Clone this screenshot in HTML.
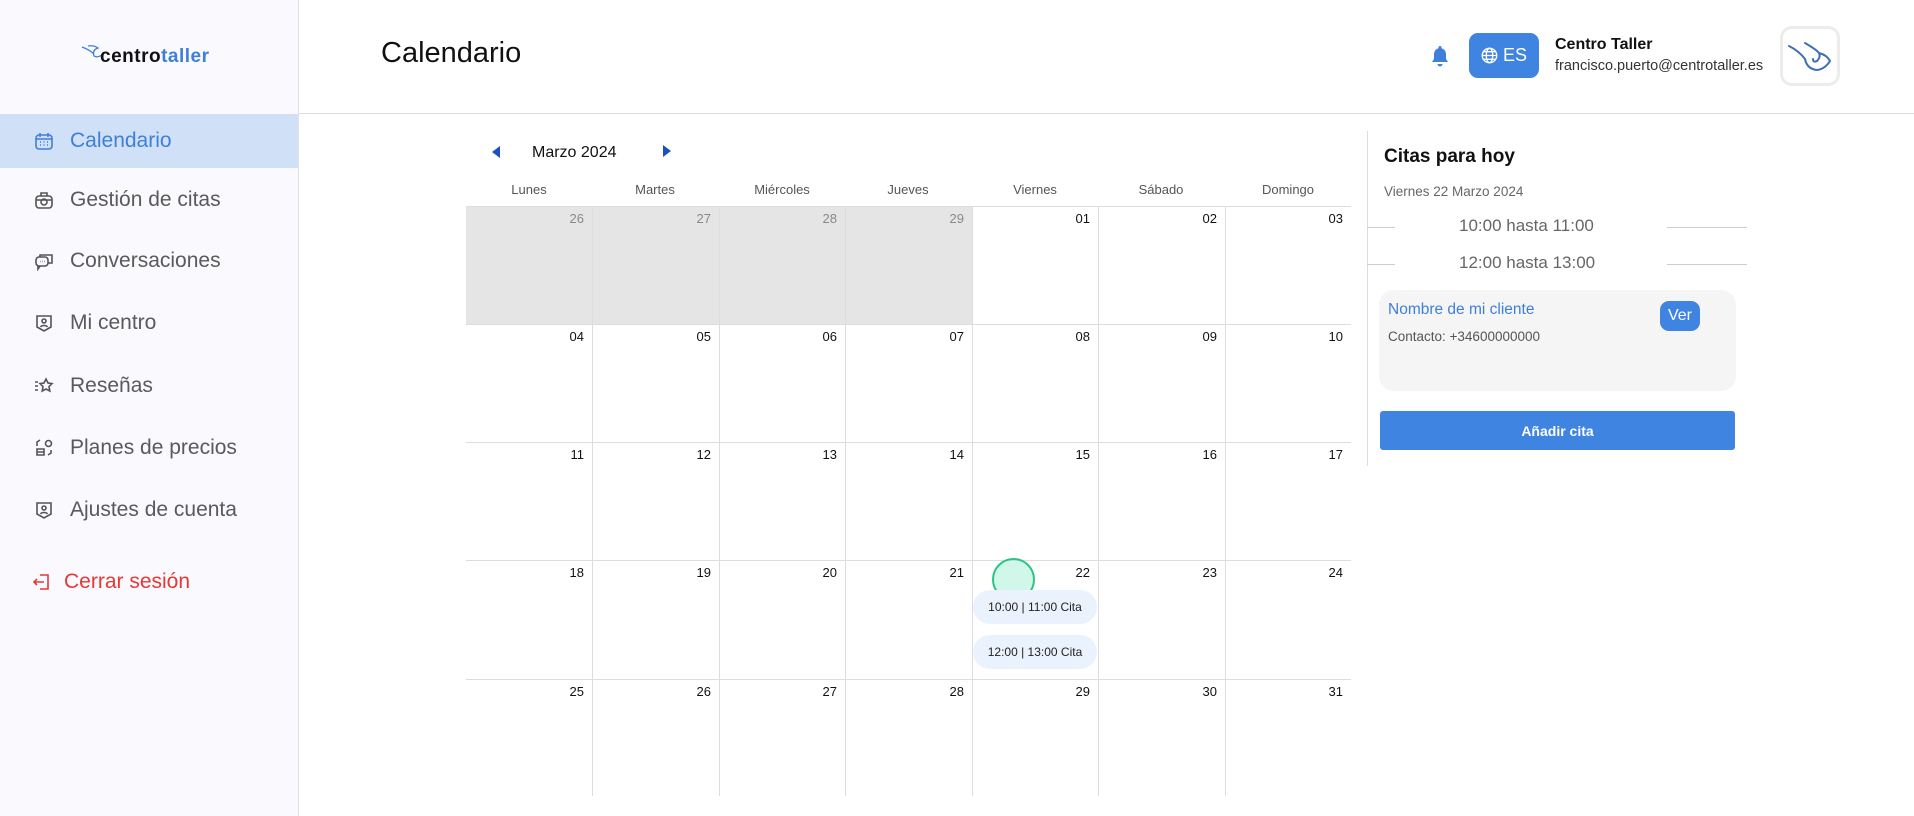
<!DOCTYPE html>
<html><head><meta charset="utf-8"><style>
*{box-sizing:border-box;margin:0;padding:0}
body{width:1914px;height:816px;overflow:hidden;background:#fff;font-family:"Liberation Sans",sans-serif;position:relative;color:#111}
.abs{position:absolute}
.side{left:0;top:0;width:299px;height:816px;background:#f9f9fe;border-right:1px solid #e2e2ea}
.item{position:absolute;left:0;width:298px;height:54px;display:flex;align-items:center;padding-left:34px;font-size:21px;color:#5a5a5a}
.item svg{width:20px;height:20px;margin-right:16px;stroke:#555;fill:none;stroke-width:1.6}
.item.act{background:#cfe0f7;color:#3f7fd9}
.item.act svg{stroke:#3f7fd9}
.hdr{left:299px;top:0;right:0;height:114px;border-bottom:1px solid #ddd}
.cell{position:absolute;border-left:1px solid #ddd;border-top:1px solid #ddd;font-size:13px;text-align:right;padding:4px 8px 0 0;color:#111}
.cell.g{background:#e5e5e5;color:#888}
.dn{position:absolute;top:182px;font-size:13px;color:#555;text-align:center;width:126px}
.pill{position:absolute;left:973px;width:124px;height:34px;border-radius:17px;background:#eaf2fd;font-size:12px;color:#222;display:flex;align-items:center;justify-content:center}
.tl{position:absolute;height:1px;background:#ccc}
</style></head><body>
<div class="abs side">
  <div class="abs" style="left:80px;top:42px;width:150px;height:30px">
    <svg width="30" height="20" style="position:absolute;left:0;top:2px" viewBox="0 0 30 20"><path d="M2 3 Q10 6 14 10 M8 2 Q14 1 18 4 Q12 6 14 12 Q17 14 22 11" stroke="#3f7fd9" stroke-width="1.3" fill="none"/></svg>
    <span style="position:absolute;left:20px;top:4px;font-size:19px;font-weight:bold;letter-spacing:0.5px;color:#111">centro<span style="color:#3f7fd9">taller</span></span>
  </div>
  <div class="item act" style="top:114px"><svg viewBox="0 0 20 20"><rect x="2" y="4" width="16" height="14" rx="3"/><path d="M6 2v4M14 2v4M2 8h16M6 11h1M9.5 11h1M13 11h1M6 14h1M9.5 14h1M13 14h1"/></svg>Calendario</div>
  <div class="item" style="top:173px"><svg viewBox="0 0 20 20"><rect x="2" y="6" width="16" height="12" rx="3"/><path d="M7 6V3h6v3M2 10h16"/><circle cx="10" cy="12" r="3"/></svg>Gestión de citas</div>
  <div class="item" style="top:234px"><svg viewBox="0 0 20 20"><rect x="2" y="6" width="12" height="9" rx="3"/><path d="M6 15l-2 3v-3M6 6V4h12v8h-4M6 10.5h.5M8 10.5h.5M10 10.5h.5"/></svg>Conversaciones</div>
  <div class="item" style="top:296px"><svg viewBox="0 0 20 20"><path d="M3 3h14v11l-7 4-7-4z"/><circle cx="10" cy="8" r="2"/><path d="M6.5 14c1-2 6-2 7 0"/></svg>Mi centro</div>
  <div class="item" style="top:359px"><svg viewBox="0 0 20 20"><path d="M12 3l2 4 4 .6-3 3 .8 4.4-3.8-2-3.8 2 .8-4.4-3-3 4-.6zM1 6h3M1 10h3M1 14h3"/></svg>Reseñas</div>
  <div class="item" style="top:421px"><svg viewBox="0 0 20 20"><path d="M3 8V4l3-2M3 11h7v6H3zM3 14h7"/><circle cx="14.5" cy="5.5" r="3"/><path d="M17 12v3l-3 2"/></svg>Planes de precios</div>
  <div class="item" style="top:483px"><svg viewBox="0 0 20 20"><path d="M3 3h14v11l-7 4-7-4z"/><circle cx="10" cy="8" r="2"/><path d="M6.5 14c1-2 6-2 7 0"/></svg>Ajustes de cuenta</div>
  <div class="item" style="top:555px;padding-left:32px;color:#e53935"><svg viewBox="0 0 20 20" style="stroke:#e53935;margin-right:12px"><path d="M8 3h8v14H8M12 10H2M5 7l-3 3 3 3"/></svg>Cerrar sesión</div>
</div>
<div class="abs hdr"></div>
<div class="abs" style="left:381px;top:37px;font-size:29px;color:#111">Calendario</div>
<svg class="abs" style="left:1431px;top:45px" width="18" height="22" viewBox="0 0 18 22"><path d="M9 1a1.5 1.5 0 0 1 1.5 1.5v.7A6 6 0 0 1 15 9v5l2 3H1l2-3V9a6 6 0 0 1 4.5-5.8v-.7A1.5 1.5 0 0 1 9 1zM6.5 19h5a2.5 2.5 0 0 1-5 0z" fill="#3f7fd9"/></svg>
<div class="abs" style="left:1469px;top:33px;width:70px;height:45px;border-radius:9px;background:#3f84e0;color:#fff;font-size:18px;display:flex;align-items:center;justify-content:center;gap:5px">
<svg width="17" height="17" viewBox="0 0 20 20" fill="none" stroke="#fff" stroke-width="1.6"><circle cx="10" cy="10" r="8.5"/><ellipse cx="10" cy="10" rx="3.8" ry="8.5"/><path d="M1.5 10h17M3 5.5h14M3 14.5h14"/></svg>ES</div>
<div class="abs" style="left:1555px;top:36px;font-size:16px;font-weight:bold;color:#111">Centro Taller</div>
<div class="abs" style="left:1555px;top:58px;font-size:14.5px;color:#333">francisco.puerto@centrotaller.es</div>
<div class="abs" style="left:1780px;top:26px;width:60px;height:60px;border:3px solid #ececec;border-radius:12px;background:#fff">
<svg width="54" height="54" viewBox="0 0 54 54"><path d="M6 17 Q16 22 22 30 Q24 40 34 41 Q42 40 47 32 Q44 26 36 24 Q34 21 22 14 M36 24 Q38 28 34 32 Q30 34 30 30" stroke="#3f6fb0" stroke-width="2" fill="none" stroke-linecap="round"/></svg></div>

<svg class="abs" style="left:492px;top:146px" width="8" height="12"><path d="M8 0L0 6l8 6z" fill="#1f4fc0"/></svg>
<div class="abs" style="left:532px;top:144px;font-size:16px;color:#111">Marzo 2024</div>
<svg class="abs" style="left:663px;top:145px" width="8" height="12"><path d="M0 0l8 6-8 6z" fill="#1f4fc0"/></svg>
<div class="dn" style="left:466px">Lunes</div><div class="dn" style="left:592px">Martes</div><div class="dn" style="left:719px">Miércoles</div><div class="dn" style="left:845px">Jueves</div><div class="dn" style="left:972px">Viernes</div><div class="dn" style="left:1098px">Sábado</div><div class="dn" style="left:1225px">Domingo</div>
<div id="grid"></div>
<div class="abs" style="left:992px;top:558px;width:43px;height:43px;border-radius:50%;background:rgba(170,240,215,0.55);border:2px solid #2cc486"></div>
<div class="pill" style="top:590px">10:00 | 11:00 Cita</div>
<div class="pill" style="top:635px">12:00 | 13:00 Cita</div>

<div class="abs" style="left:1367px;top:131px;width:1px;height:335px;background:#ddd"></div>
<div class="abs" style="left:1384px;top:146px;font-size:19px;font-weight:bold;color:#111">Citas para hoy</div>
<div class="abs" style="left:1384px;top:184px;font-size:13.5px;color:#666">Viernes 22 Marzo 2024</div>
<div class="tl" style="left:1367px;top:227px;width:28px"></div><div class="tl" style="left:1667px;top:227px;width:80px"></div>
<div class="abs" style="left:1459px;top:216px;font-size:17px;color:#666">10:00 hasta 11:00</div>
<div class="tl" style="left:1367px;top:264px;width:28px"></div><div class="tl" style="left:1667px;top:264px;width:80px"></div>
<div class="abs" style="left:1459px;top:253px;font-size:17px;color:#666">12:00 hasta 13:00</div>
<div class="abs" style="left:1379px;top:290px;width:357px;height:101px;border-radius:15px;background:#f5f5f5"></div>
<div class="abs" style="left:1388px;top:301px;font-size:15.5px;color:#3f7fd9">Nombre de mi cliente</div>
<div class="abs" style="left:1388px;top:329px;font-size:13.5px;color:#555">Contacto: +34600000000</div>
<div class="abs" style="left:1660px;top:301px;width:40px;height:30px;border-radius:9px;background:#3f84e0;color:#fff;font-size:16px;display:flex;align-items:center;justify-content:center">Ver</div>
<div class="abs" style="left:1380px;top:411px;width:355px;height:39px;border-radius:3px;background:#3f84e0;color:#fff;font-size:14px;font-weight:bold;display:flex;align-items:center;justify-content:center">Añadir cita</div>
<script>
var g=document.getElementById('grid'),h='';
var xs=[466,592,719,845,972,1098,1225,1351],ys=[206,324,442,560,679,796];
var d=[26,27,28,29,1,2,3];
for(var r=0;r<5;r++)for(var c=0;c<7;c++){
 var n=r==0?d[c]:(r*7+c-3);
 var gr=r==0&&c<4;
 h+='<div class="cell'+(gr?' g':'')+'" style="left:'+xs[c]+'px;top:'+ys[r]+'px;width:'+(xs[c+1]-xs[c])+'px;height:'+(ys[r+1]-ys[r])+'px;'+(c==0?'border-left:none;':'')+'">'+(n<10?'0'+n:n)+'</div>';
}
g.innerHTML=h;
</script>
</body></html>
